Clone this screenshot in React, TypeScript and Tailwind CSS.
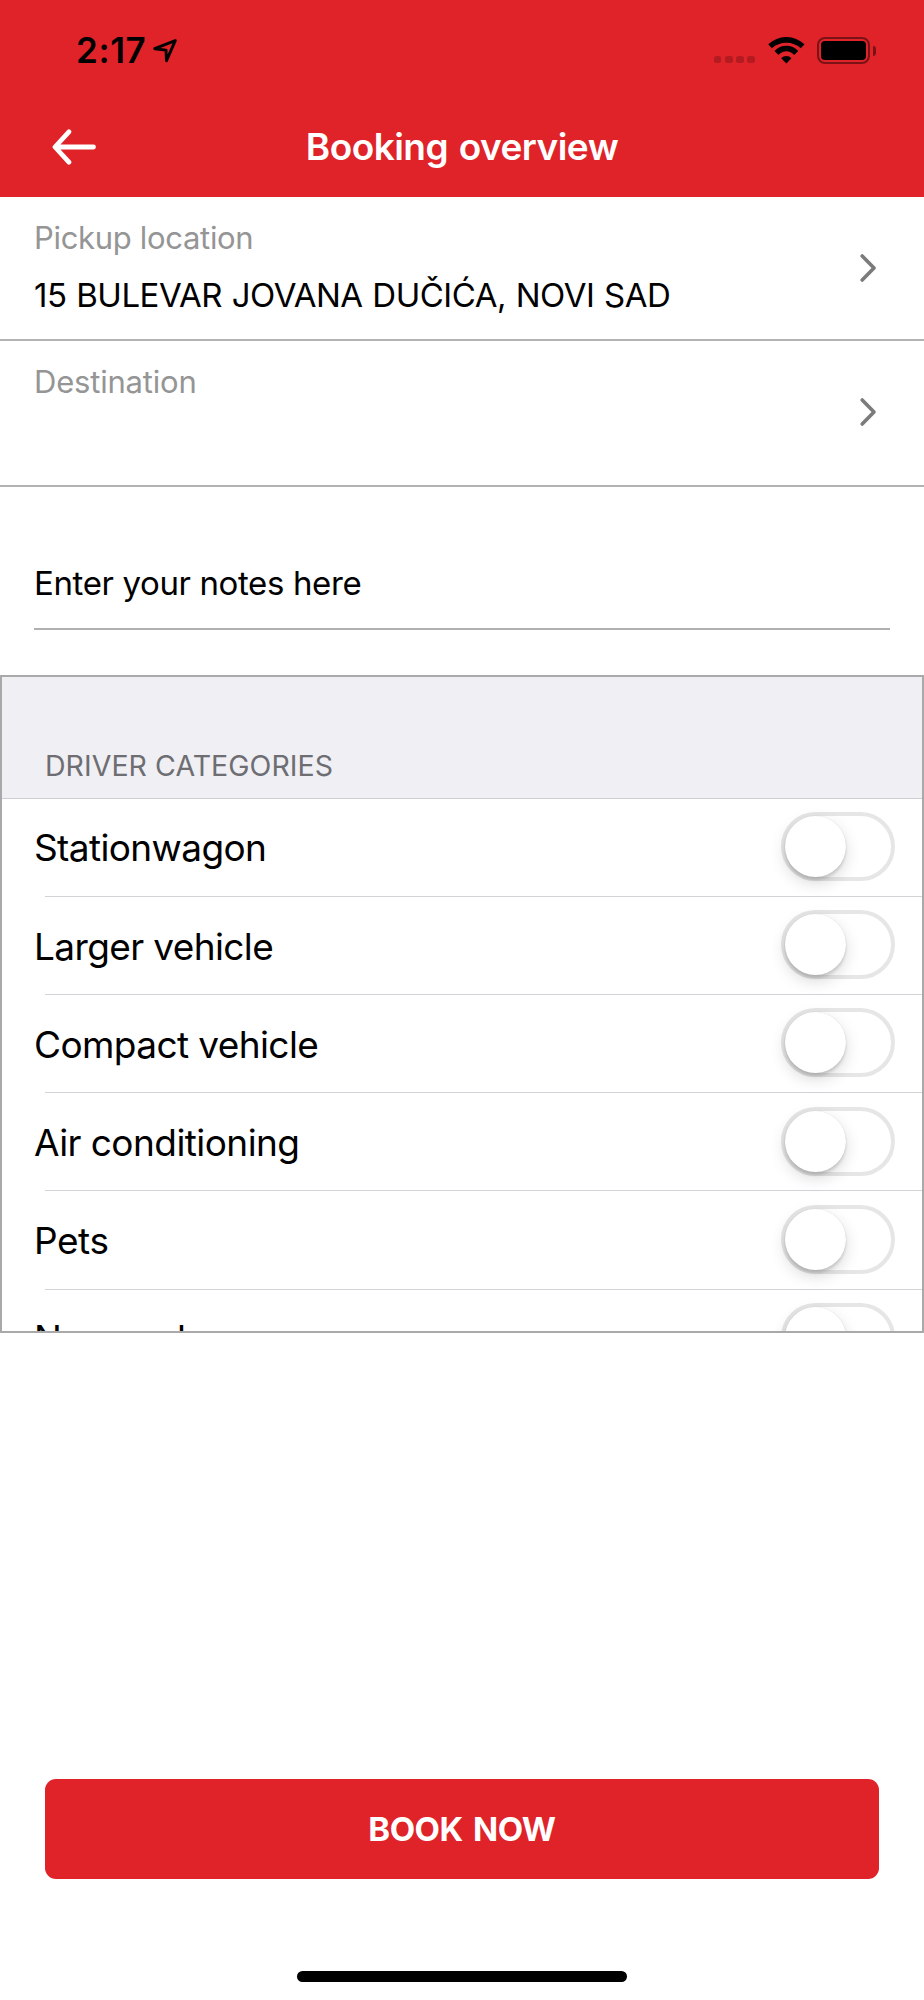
import React, { useState } from 'react';

const categories = [
  { id: 'stationwagon', label: 'Stationwagon', tracking: 'tracking-[-0.62px]' },
  { id: 'larger', label: 'Larger vehicle', tracking: 'tracking-[-0.62px]' },
  { id: 'compact', label: 'Compact vehicle', tracking: 'tracking-[-0.6px]' },
  { id: 'air', label: 'Air conditioning', tracking: 'tracking-[-0.56px]' },
  { id: 'pets', label: 'Pets', tracking: 'tracking-[-0.45px]' },
  { id: 'nonsmoker', label: 'Nonsmoker', tracking: 'tracking-[-0.5px]' },
];

function StatusBar() {
  return (
    <div className="flex h-[101px] items-center justify-between pl-[76px] pr-[48px] text-black">
      <div className="flex items-center gap-[6px]">
        <span className="text-[35px] leading-none font-semibold tracking-[0.6px]">2:17</span>
        <svg width="26" height="26" viewBox="0 0 26 26" fill="none">
          <path
            d="M2.7 10.7 L23.3 2.6 L14.5 22.7 L14 12.1 Z"
            stroke="currentColor"
            strokeWidth="2.9"
            strokeLinejoin="round"
          />
        </svg>
      </div>

      <div className="flex items-center">
        {/* No signal dots */}
        <div className="mt-[18px] flex gap-[3.5px]">
          <span className="size-[7.7px] rounded-[2.5px] bg-black/20" />
          <span className="size-[7.7px] rounded-[2.5px] bg-black/20" />
          <span className="size-[7.7px] rounded-[2.5px] bg-black/20" />
          <span className="size-[7.7px] rounded-[2.5px] bg-black/20" />
        </div>

        <svg className="ml-[12.5px]" width="37" height="27" viewBox="0 0 37 27" fill="currentColor">
          <path d="M0.2 7.3 A26.2 26.2 0 0 1 36.5 7.3 L32.8 11.3 A21.6 21.6 0 0 0 3.9 11.3 Z" />
          <path d="M6.5 14 A15.9 15.9 0 0 1 30.2 14 L26.2 18 A10.2 10.2 0 0 0 10.5 18 Z" />
          <path d="M13.2 21.2 A7.4 7.4 0 0 1 23.5 21.2 L18.35 26.4 Z" />
        </svg>

        {/* Battery */}
        <div className="ml-[12.5px] flex h-[27px] w-[53px] rounded-[8px] border-2 border-black/45 p-[2px]">
          <div className="flex-1 rounded-[4px] bg-black" />
        </div>
        <div className="ml-[3px] h-[10px] w-[3px] rounded-r-full bg-black/45" />
      </div>
    </div>
  );
}

function Chevron() {
  return (
    <svg width="18" height="30" viewBox="0 0 18 30" fill="none">
      <path
        d="M3.2 3 L15 15 L3.2 27"
        stroke="#7b7b7b"
        strokeWidth="3.6"
        strokeLinecap="round"
        strokeLinejoin="round"
      />
    </svg>
  );
}

function Switch({ checked, onChange }: { checked: boolean; onChange: () => void }) {
  return (
    <button
      role="switch"
      aria-checked={checked}
      onClick={onChange}
      className={`flex h-[69px] w-[114px] items-center rounded-full border-[4px] ${
        checked ? 'justify-end border-[#4cd964] bg-[#4cd964]' : 'justify-start border-[#e6e6e6] bg-white'
      }`}
    >
      <span className="size-[61px] rounded-full bg-white shadow-[0_6px_16px_rgba(0,0,0,0.15),0_3px_3px_rgba(0,0,0,0.13),0_0_1px_rgba(0,0,0,0.15)]" />
    </button>
  );
}

export default function App() {
  const [selected, setSelected] = useState<string[]>([]);
  const [notes, setNotes] = useState('');

  const toggle = (id: string) => {
    setSelected(prev => (prev.includes(id) ? prev.filter(c => c !== id) : [...prev, id]));
  };

  return (
    <div className="flex h-[2000px] w-[924px] flex-col overflow-hidden bg-white font-['Inter','Liberation_Sans',sans-serif] text-black">
      {/* Header */}
      <header className="h-[197px] shrink-0 bg-[#e02229]">
        <StatusBar />
        <div className="flex h-[92px] items-center">
          <button className="w-[110px] pl-[51px]" aria-label="Back">
            <svg width="46" height="36" viewBox="0 0 46 36" fill="none">
              <path
                d="M17.9 2.8 L4 18 L17.9 33.2 M4.4 18 H42.5"
                stroke="white"
                strokeWidth="4.8"
                strokeLinecap="round"
                strokeLinejoin="round"
              />
            </svg>
          </button>
          <h1 className="flex-1 text-center text-[37px] leading-[44px] font-semibold tracking-[-0.55px] [word-spacing:2px] text-white">
            Booking overview
          </h1>
          <div className="w-[110px]" />
        </div>
      </header>

      {/* Locations */}
      <div className="flex h-[144px] shrink-0 items-center justify-between border-b-2 border-[#b2b2b2] pl-[34px] pr-[47px]">
        <div className="h-full pt-[21px]">
          <p className="text-[31px] leading-[40px] tracking-[-0.32px] text-[#959595]">Pickup location</p>
          <p className="mt-[17px] text-[33px] leading-[40px] tracking-[-0.5px] [word-spacing:1px]">
            15 BULEVAR JOVANA DUČIĆA, NOVI SAD
          </p>
        </div>
        <Chevron />
      </div>
      <div className="flex h-[146px] shrink-0 items-center justify-between border-b-2 border-[#b2b2b2] pl-[34px] pr-[47px]">
        <div className="h-full pt-[21px]">
          <p className="text-[31px] leading-[40px] tracking-[-0.2px] text-[#959595]">Destination</p>
        </div>
        <div className="pb-[2px]">
          <Chevron />
        </div>
      </div>

      {/* Notes */}
      <div className="mx-[34px] mt-[75px] mb-[45px] flex h-[68px] shrink-0 border-b-2 border-[#b0b0b0]">
        <input
          value={notes}
          onChange={e => setNotes(e.target.value)}
          placeholder="Enter your notes here"
          className="h-[43px] w-full text-[33px] tracking-[-0.38px] outline-none placeholder:text-black"
        />
      </div>

      {/* Driver categories */}
      <section className="h-[658px] shrink-0 overflow-hidden border-2 border-[#a9a9a9]">
        <div className="flex h-[121.6px] items-end border-b border-[#cfced3] bg-[#efeff4] pb-3 pl-[43px]">
          <h2 className="text-[28.5px] leading-[40px] tracking-[0.05px] text-[#6d6d72]">DRIVER CATEGORIES</h2>
        </div>
        {categories.map(category => (
          <div key={category.id}>
            <div className="flex h-[97.2px] items-center justify-between pb-[1.5px] pl-[32px] pr-[27px]">
              <span className={`pt-[4px] text-[37px] leading-[44px] ${category.tracking}`}>{category.label}</span>
              <Switch checked={selected.includes(category.id)} onChange={() => toggle(category.id)} />
            </div>
            <div className="ml-[43px] h-px bg-[#d3d2d6]" />
          </div>
        ))}
      </section>

      {/* Submit */}
      <button className="mt-[446px] ml-[45px] h-[100px] w-[834px] shrink-0 rounded-[11px] bg-[#e02229] pt-[2px] text-[33px] font-bold tracking-[-0.5px] [word-spacing:3px] text-white">
        BOOK NOW
      </button>

      {/* Home indicator */}
      <div className="mx-auto mt-[92px] h-[11px] w-[330px] shrink-0 rounded-full bg-black" />
    </div>
  );
}
